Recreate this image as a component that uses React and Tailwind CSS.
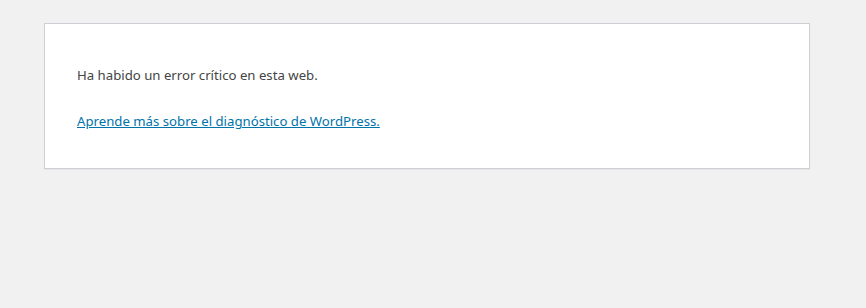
export default function App() {
  return (
    <div className="min-h-[308px] bg-[#f1f1f1] pt-[23px] pl-[44px] font-['Noto_Sans',sans-serif] text-[13.2px] leading-[21px] text-[#444]">
      <div className="w-[766px] h-[146px] border border-[#ccd0d4] bg-white px-8 pt-[41px] shadow-[0_1px_1px_rgba(0,0,0,0.04)]">
        <p>Ha habido un error crítico en esta web.</p>
        <p className="mt-[25px]">
          <a href="#" className="text-[#0073aa] underline">
            Aprende más sobre el diagnóstico de WordPress.
          </a>
        </p>
      </div>
    </div>
  );
}
